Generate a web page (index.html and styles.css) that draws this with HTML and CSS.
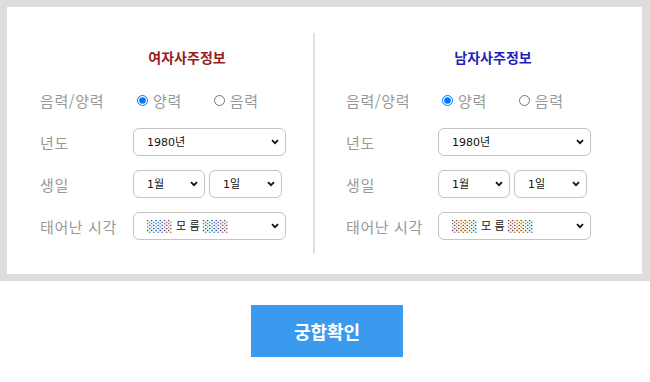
FILE: index.html
```html
<!DOCTYPE html>
<html lang="ko">
<head>
  <meta charset="UTF-8" />
  <meta name="viewport" content="width=device-width, initial-scale=1.0"/>
  <title>궁합보기</title>
  <link rel="stylesheet" href="styles.css">
</head>
<body>

  <div class="frame">
    <div class="panel">

      <div class="side side-left">
        <h3 class="title title-female">여자사주정보</h3>

        <div class="row">
          <span class="label">음력/양력</span>
          <div class="field">
            <label class="radio"><input type="radio" name="f_cal" checked> 양력</label>
            <label class="radio"><input type="radio" name="f_cal"> 음력</label>
          </div>
        </div>

        <div class="row">
          <span class="label">년도</span>
          <div class="field">
            <select class="sel sel-wide"><option>1980년</option></select>
          </div>
        </div>

        <div class="row">
          <span class="label">생일</span>
          <div class="field">
            <select class="sel sel-half"><option>1월</option></select>
            <select class="sel sel-half"><option>1일</option></select>
          </div>
        </div>

        <div class="row">
          <span class="label">태어난 시각</span>
          <div class="field">
            <select class="sel sel-wide"><option>░░░ 모 름 ░░░</option></select>
          </div>
        </div>
      </div>

      <div class="divider"></div>

      <div class="side side-right">
        <h3 class="title title-male">남자사주정보</h3>

        <div class="row">
          <span class="label">음력/양력</span>
          <div class="field">
            <label class="radio"><input type="radio" name="m_cal" checked> 양력</label>
            <label class="radio"><input type="radio" name="m_cal"> 음력</label>
          </div>
        </div>

        <div class="row">
          <span class="label">년도</span>
          <div class="field">
            <select class="sel sel-wide"><option>1980년</option></select>
          </div>
        </div>

        <div class="row">
          <span class="label">생일</span>
          <div class="field">
            <select class="sel sel-half"><option>1월</option></select>
            <select class="sel sel-half"><option>1일</option></select>
          </div>
        </div>

        <div class="row">
          <span class="label">태어난 시각</span>
          <div class="field">
            <select class="sel sel-wide"><option>░░░ 모 름 ░░░</option></select>
          </div>
        </div>
      </div>

    </div>
  </div>

  <div class="actions">
    <button class="btn">궁합확인</button>
  </div>

</body>
</html>
```

FILE: styles.css
```css
body {
  margin: 0;
  padding: 0;
  background: #ffffff;
  font-family: 'Noto Sans CJK KR', 'Noto Sans', sans-serif;
}

.frame {
  border-style: solid;
  border-color: #dddddd;
  border-width: 7px 8px 7px 7px;
}

.panel {
  display: flex;
  height: 267px;
  background: #ffffff;
}

.side {
  padding-top: 40px;
  box-sizing: border-box;
}

.side-left {
  width: 306px;
  padding-left: 33px;
}

.side-right {
  flex: 1;
  padding-left: 31px;
}

.divider {
  width: 2px;
  background: #e0e0e0;
  margin: 26px 0 20px;
}

.title {
  width: 294px;
  margin: 0 0 12px;
  text-align: center;
  font-size: 14px;
  line-height: 20px;
  font-weight: bold;
}

.title-female {
  color: #9b1c1c;
}

.title-male {
  color: #1f1fb8;
}

.row {
  display: flex;
  align-items: center;
  height: 42px;
}

.label {
  width: 93px;
  font-size: 15px;
  letter-spacing: 0.6px;
  color: #999999;
}

.side-right .label {
  width: 92px;
}

.field {
  display: flex;
  align-items: center;
  gap: 4px;
}

.radio {
  display: flex;
  align-items: center;
  font-size: 15px;
  letter-spacing: 0.6px;
  color: #999999;
  margin-right: 24px;
}

.radio input {
  width: 11px;
  height: 11px;
  margin: 0 5px 0 4px;
}

.sel {
  appearance: none;
  -webkit-appearance: none;
  height: 28px;
  border: 1px solid #c4c4c4;
  border-radius: 6px;
  background: #ffffff url("data:image/svg+xml;utf8,<svg xmlns='http://www.w3.org/2000/svg' width='8' height='6' viewBox='0 0 8 6'><path d='M1 1.2 L4 4.2 L7 1.2' fill='none' stroke='%23111' stroke-width='1.8'/></svg>") no-repeat right 6px center;
  padding: 0 20px 0 13px;
  font-family: 'DejaVu Sans', 'Noto Sans CJK KR', sans-serif;
  font-size: 11px;
  color: #111111;
}

.sel-wide {
  width: 153px;
}

.sel-half {
  width: 72px;
}

.sel-half + .sel-half {
  width: 73px;
}

.actions {
  display: flex;
  justify-content: center;
  padding: 24px 0 0 4px;
}

.btn {
  width: 152px;
  height: 52px;
  background: #3a9bee;
  color: #ffffff;
  border: none;
  font-family: 'Noto Sans CJK KR', sans-serif;
  font-size: 18px;
  font-weight: bold;
  cursor: pointer;
}
```
